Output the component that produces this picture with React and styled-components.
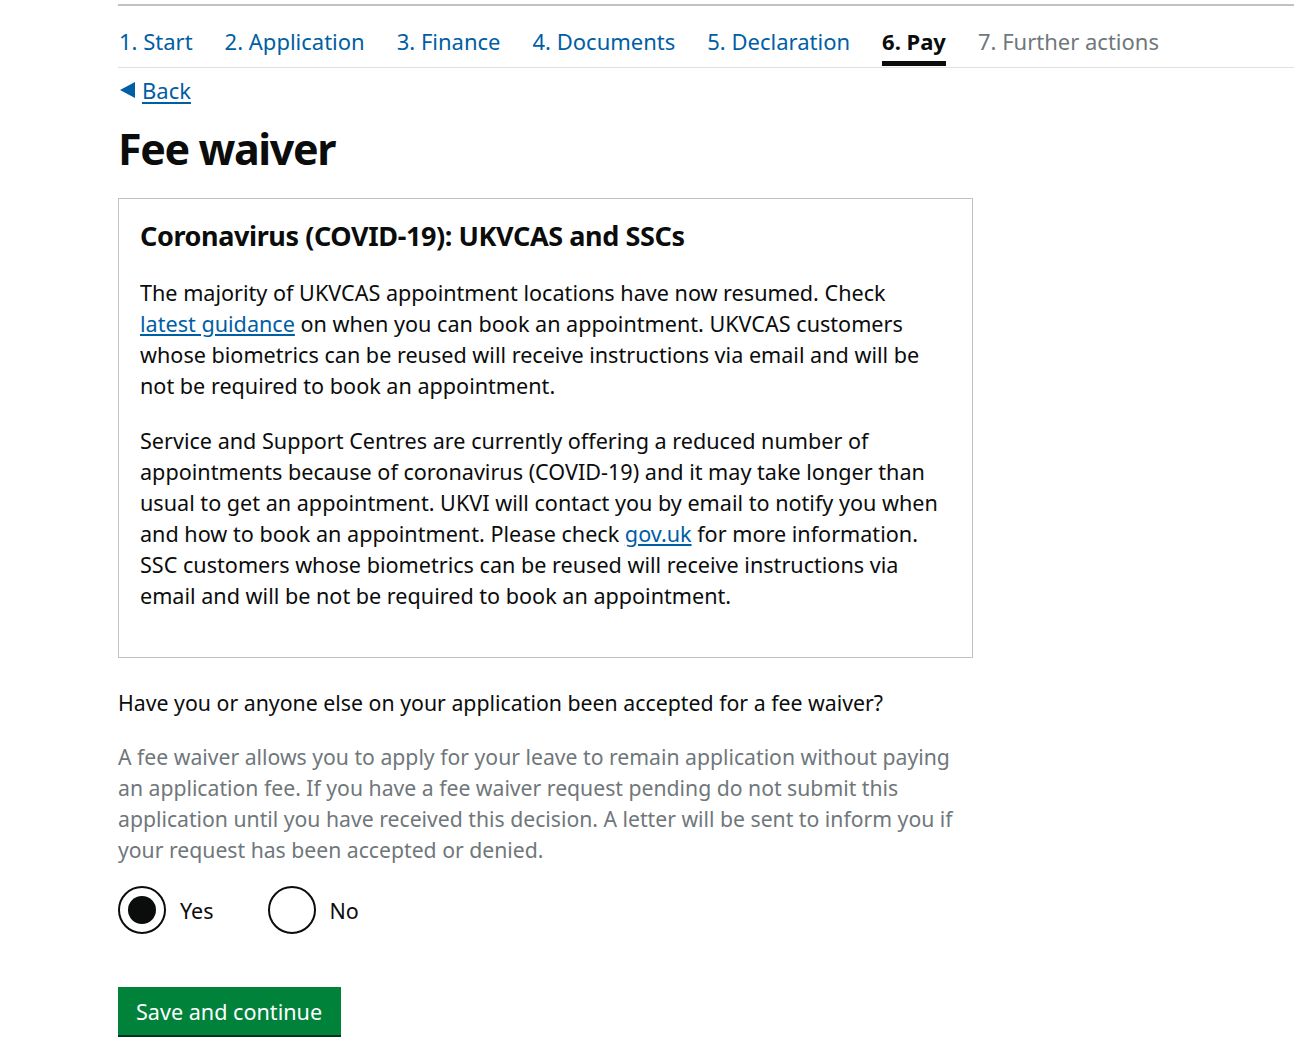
import React, { useState } from 'react';
import styled, { createGlobalStyle } from 'styled-components';

const Global = createGlobalStyle`
  body {
    margin: 0;
    background: #fff;
    color: #0b0c0c;
    font-family: "Noto Sans", Roboto, Arial, sans-serif;
  }
  * { box-sizing: border-box; }
`;

const Page = styled.main`
  padding: 4px 0 24px 118px;
`;

const Steps = styled.nav`
  display: flex;
  gap: 32px;
  border-top: 2px solid #bfc1c3;
  border-bottom: 1px solid #dee0e2;
  padding-left: 1px;
`;

const Step = styled.a`
  display: block;
  padding: 19px 0 4px;
  font-size: 22px;
  line-height: 32px;
  text-decoration: none;
  color: ${p => (p.$state === 'current' ? '#0b0c0c' : p.$state === 'todo' ? '#6f777b' : '#005ea5')};
  font-weight: ${p => (p.$state === 'current' ? 700 : 400)};
  border-bottom: 5px solid ${p => (p.$state === 'current' ? '#0b0c0c' : 'transparent')};
  margin-bottom: 1px;
`;

const BackLink = styled.a`
  display: inline-flex;
  align-items: center;
  gap: 7px;
  margin-top: 7px;
  margin-left: 2px;
  font-size: 22px;
  line-height: 30px;
  color: #005ea5;
  text-decoration: underline;
  text-underline-offset: 3px;
  &::before {
    content: '';
    border-style: solid;
    border-width: 8px 15px 8px 0;
    border-color: transparent #005ea5 transparent transparent;
  }
`;

const Title = styled.h1`
  margin: 18px 0 23px;
  font-size: 43px;
  line-height: 52px;
  font-weight: 700;
  letter-spacing: -1.4px;
`;

const Notice = styled.section`
  width: 855px;
  border: 1px solid #bfc1c3;
  padding: 20px 21px 46px;
`;

const NoticeTitle = styled.h2`
  margin: 0 0 24px;
  font-size: 27px;
  line-height: 34px;
  font-weight: 700;
  letter-spacing: -0.4px;
`;

const Para = styled.p`
  margin: 0 0 ${p => (p.$hint ? '0' : '24px')};
  font-size: ${p => (p.$hint ? '21.2px' : '21.6px')};
  line-height: 31px;
  white-space: nowrap;
  color: ${p => (p.$hint ? '#6f777b' : '#0b0c0c')};
  &:last-child { margin-bottom: 0; }
`;

const Link = styled.a`
  color: #005ea5;
  text-decoration: underline;
  text-underline-offset: 2px;
`;

const Fieldset = styled.fieldset`
  margin: 29px 0 0;
  padding: 0;
  border: 0;
  width: 860px;
`;

const Legend = styled.legend`
  padding: 0;
  margin-bottom: 23px;
  font-size: 21.3px;
  line-height: 31px;
  white-space: nowrap;
`;

const Radios = styled.div`
  display: flex;
  gap: 30px;
  margin-top: 21px;
`;

const RadioLabel = styled.label`
  display: flex;
  align-items: center;
  gap: 14px;
  font-size: 21.5px;
  cursor: pointer;
  padding-right: 24px;
`;

const RadioInput = styled.input.attrs({ type: 'radio' })`
  appearance: none;
  margin: 0;
  width: 48px;
  height: 48px;
  border: 2px solid #0b0c0c;
  border-radius: 50%;
  display: grid;
  place-items: center;
  cursor: pointer;
  &::before {
    content: '';
    width: 28px;
    height: 28px;
    border-radius: 50%;
    background: #0b0c0c;
    opacity: 0;
  }
  &:checked::before { opacity: 1; }
`;

const Button = styled.button`
  margin-top: 53px;
  border: 0;
  background: #00823b;
  color: #fff;
  font-family: inherit;
  font-size: 21.6px;
  line-height: 26px;
  padding: 12px 19px 10px 18px;
  box-shadow: 0 2px 0 #003618;
  cursor: pointer;
`;

const steps = [
  ['1. Start', 'done'],
  ['2. Application', 'done'],
  ['3. Finance', 'done'],
  ['4. Documents', 'done'],
  ['5. Declaration', 'done'],
  ['6. Pay', 'current'],
  ['7. Further actions', 'todo'],
];

export default function App() {
  const [waiver, setWaiver] = useState('yes');

  return (
    <>
      <Global />
      <Page>
        <Steps>
          {steps.map(([label, state]) => (
            <Step key={label} href="#" $state={state}>{label}</Step>
          ))}
        </Steps>

        <BackLink href="#">Back</BackLink>
        <Title>Fee waiver</Title>

        <Notice>
          <NoticeTitle>Coronavirus (COVID-19): UKVCAS and SSCs</NoticeTitle>
          <Para>
            The majority of UKVCAS appointment locations have now resumed. Check<br />
            <Link href="#">latest guidance</Link> on when you can book an appointment. UKVCAS customers<br />
            whose biometrics can be reused will receive instructions via email and will be<br />
            not be required to book an appointment.
          </Para>
          <Para>
            Service and Support Centres are currently offering a reduced number of<br />
            appointments because of coronavirus (COVID-19) and it may take longer than<br />
            usual to get an appointment. UKVI will contact you by email to notify you when<br />
            and how to book an appointment. Please check <Link href="#">gov.uk</Link> for more information.<br />
            SSC customers whose biometrics can be reused will receive instructions via<br />
            email and will be not be required to book an appointment.
          </Para>
        </Notice>

        <Fieldset>
          <Legend>Have you or anyone else on your application been accepted for a fee waiver?</Legend>
          <Para $hint>
            A fee waiver allows you to apply for your leave to remain application without paying<br />
            an application fee. If you have a fee waiver request pending do not submit this<br />
            application until you have received this decision. A letter will be sent to inform you if<br />
            your request has been accepted or denied.
          </Para>
          <Radios>
            <RadioLabel>
              <RadioInput name="waiver" checked={waiver === 'yes'} onChange={() => setWaiver('yes')} />
              Yes
            </RadioLabel>
            <RadioLabel>
              <RadioInput name="waiver" checked={waiver === 'no'} onChange={() => setWaiver('no')} />
              No
            </RadioLabel>
          </Radios>
        </Fieldset>

        <Button type="button">Save and continue</Button>
      </Page>
    </>
  );
}
